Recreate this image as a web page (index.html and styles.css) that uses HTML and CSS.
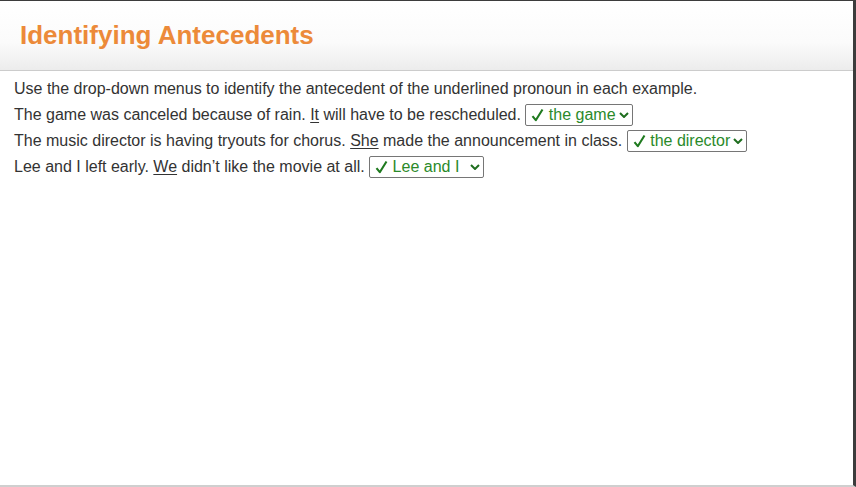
FILE: index.html
```html
<!DOCTYPE html>
<html lang="en">
<head>
<meta charset="utf-8">
<title>Identifying Antecedents</title>
<link rel="stylesheet" href="styles.css">
</head>
<body>
<div class="frame">
  <header class="header">
    <h1 class="title">Identifying Antecedents</h1>
  </header>
  <main class="content">
    <p class="instructions">Use the drop-down menus to identify the antecedent of the underlined pronoun in each example.</p>
    <div class="row">The game was canceled because of rain. <u>It</u> will have to be rescheduled. <span class="dropdown"><svg class="check" viewBox="0 0 13 14" width="13" height="14"><path d="M1.5 8.2 L4.8 12.2 L11.5 1.5" fill="none" stroke="currentColor" stroke-width="2.1" stroke-linejoin="round"/></svg> the game<svg class="chev" viewBox="0 0 10 6" width="10" height="6"><path d="M1 1 L5 5 L9 1" fill="none" stroke="currentColor" stroke-width="2"/></svg></span></div>
    <div class="row">The music director is having tryouts for chorus. <u>She</u> made the announcement in class. <span class="dropdown"><svg class="check" viewBox="0 0 13 14" width="13" height="14"><path d="M1.5 8.2 L4.8 12.2 L11.5 1.5" fill="none" stroke="currentColor" stroke-width="2.1" stroke-linejoin="round"/></svg> the director<svg class="chev" viewBox="0 0 10 6" width="10" height="6"><path d="M1 1 L5 5 L9 1" fill="none" stroke="currentColor" stroke-width="2"/></svg></span></div>
    <div class="row">Lee and I left early. <u>We</u> didn’t like the movie at all. <span class="dropdown"><svg class="check" viewBox="0 0 13 14" width="13" height="14"><path d="M1.5 8.2 L4.8 12.2 L11.5 1.5" fill="none" stroke="currentColor" stroke-width="2.1" stroke-linejoin="round"/></svg> Lee and I <svg class="chev wide" viewBox="0 0 10 6" width="10" height="6"><path d="M1 1 L5 5 L9 1" fill="none" stroke="currentColor" stroke-width="2"/></svg></span></div>
  </main>
</div>
</body>
</html>
```

FILE: styles.css
```css
html, body {
  margin: 0;
  padding: 0;
  background: #ffffff;
}

body {
  font-family: "Liberation Sans", Arial, sans-serif;
  color: #333333;
}

.frame {
  box-sizing: border-box;
  width: 856px;
  height: 487px;
  border-top: 1px solid #3c3c3c;
  border-right: 3px solid #3c3c3c;
  border-bottom: 2px solid #cfcfcf;
  display: flex;
  flex-direction: column;
}

.header {
  height: 69px;
  border-bottom: 1px solid #cccccc;
  background: linear-gradient(to bottom, #ffffff 0%, #fbfbfb 60%, #ececec 100%);
  display: flex;
  align-items: center;
  padding-left: 20px;
}

.title {
  margin: 0;
  padding-bottom: 1px;
  font-size: 26px;
  font-weight: bold;
  color: #ec8a39;
  line-height: 30px;
}

.content {
  padding: 6px 0 0 14px;
  font-size: 16px;
}

.instructions {
  margin: 0;
  height: 25px;
  line-height: 24px;
}

.row {
  height: 26px;
  line-height: 26px;
  white-space: nowrap;
}

.row u {
  text-decoration-thickness: 1px;
  text-underline-offset: 2px;
}

.dropdown {
  display: inline-block;
  box-sizing: border-box;
  height: 22px;
  line-height: 20px;
  padding: 0 3px 0 5px;
  border: 1px solid #767676;
  border-radius: 2px;
  color: #2a8a2a;
  vertical-align: 0;
  white-space: pre;
}

.check {
  color: #1f7a1f;
  vertical-align: -2px;
}

.chev {
  margin-left: 3px;
  color: #1f6e1f;
  vertical-align: 2px;
}

.chev.wide {
  margin-left: 6px;
}
```
